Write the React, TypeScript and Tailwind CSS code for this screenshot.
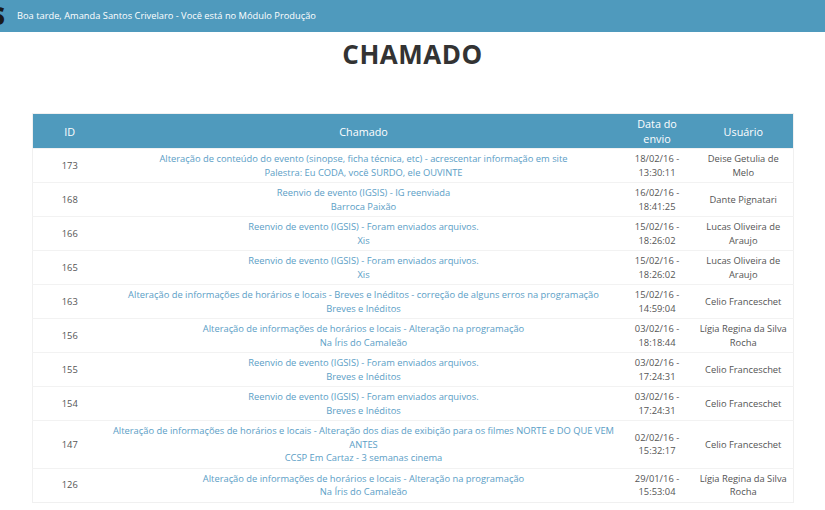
import React from "react";

type Row = { id: string; title: string; sub: string; date: string; time: string; user: string };

const rows: Row[] = [
  { id: "173", title: "Alteração de conteúdo do evento (sinopse, ficha técnica, etc) - acrescentar informação em site", sub: "Palestra: Eu CODA, você SURDO, ele OUVINTE", date: "18/02/16 -", time: "13:30:11", user: "Deise Getulia de Melo" },
  { id: "168", title: "Reenvio de evento (IGSIS) - IG reenviada", sub: "Barroca Paixão", date: "16/02/16 -", time: "18:41:25", user: "Dante Pignatari" },
  { id: "166", title: "Reenvio de evento (IGSIS) - Foram enviados arquivos.", sub: "Xis", date: "15/02/16 -", time: "18:26:02", user: "Lucas Oliveira de Araujo" },
  { id: "165", title: "Reenvio de evento (IGSIS) - Foram enviados arquivos.", sub: "Xis", date: "15/02/16 -", time: "18:26:02", user: "Lucas Oliveira de Araujo" },
  { id: "163", title: "Alteração de informações de horários e locais - Breves e Inéditos - correção de alguns erros na programação", sub: "Breves e Inéditos", date: "15/02/16 -", time: "14:59:04", user: "Celio Franceschet" },
  { id: "156", title: "Alteração de informações de horários e locais - Alteração na programação", sub: "Na Íris do Camaleão", date: "03/02/16 -", time: "18:18:44", user: "Lígia Regina da Silva Rocha" },
  { id: "155", title: "Reenvio de evento (IGSIS) - Foram enviados arquivos.", sub: "Breves e Inéditos", date: "03/02/16 -", time: "17:24:31", user: "Celio Franceschet" },
  { id: "154", title: "Reenvio de evento (IGSIS) - Foram enviados arquivos.", sub: "Breves e Inéditos", date: "03/02/16 -", time: "17:24:31", user: "Celio Franceschet" },
  { id: "147", title: "Alteração de informações de horários e locais - Alteração dos dias de exibição para os filmes NORTE e DO QUE VEM ANTES", sub: "CCSP Em Cartaz - 3 semanas cinema", date: "02/02/16 -", time: "15:32:17", user: "Celio Franceschet" },
  { id: "126", title: "Alteração de informações de horários e locais - Alteração na programação", sub: "Na Íris do Camaleão", date: "29/01/16 -", time: "15:53:04", user: "Lígia Regina da Silva Rocha" },
];

export default function App() {
  return (
    <div className="w-[825px] h-[510px] overflow-hidden bg-white" style={{ fontFamily: '"Open Sans", "Noto Sans", sans-serif' }}>
      <div className="h-[32px] bg-[#4f9abd] flex items-center">
        <span className="text-[24px] font-extrabold text-[#1a1a1a] leading-none -ml-[9px] w-[16px] overflow-hidden">S</span>
        <span className="ml-[10px] text-white text-[9.3px]">Boa tarde, Amanda Santos Crivelaro - Você está no Módulo Produção</span>
      </div>
      <div className="flex justify-center pt-[4px]">
        <h1 className="text-[26px] font-bold text-[#333] tracking-[0.5px] leading-[36px]">CHAMADO</h1>
      </div>
      <div className="pl-[32px] pt-[41px]">
        <table className="w-[761px] table-fixed border-collapse border border-[#f0f0f0] text-center">
          <colgroup>
            <col className="w-[74px]" />
            <col className="w-[514px]" />
            <col className="w-[73px]" />
            <col className="w-[100px]" />
          </colgroup>
          <thead>
            <tr className="bg-[#4f9abd] text-white text-[10.8px] leading-[15px] h-[35px]">
              <th className="font-normal px-[4px]">ID</th>
              <th className="font-normal px-[4px]">Chamado</th>
              <th className="font-normal px-[8px]">Data do envio</th>
              <th className="font-normal px-[4px]">Usuário</th>
            </tr>
          </thead>
          <tbody className="text-[9.35px] leading-[13.5px] text-[#555]">
            {rows.map((r) => (
              <tr key={r.id} className="border-t border-[#f2f2f2] h-[34px]">
                <td className="px-[4px] py-[3px]">{r.id}</td>
                <td className="px-[6px] py-[3px] text-[#5b9ec6]">
                  <div>{r.title}</div>
                  <div>{r.sub}</div>
                </td>
                <td className="px-[10px] py-[3px]">
                  <div>{r.date}</div>
                  <div>{r.time}</div>
                </td>
                <td className="px-[5px] py-[3px]">{r.user}</td>
              </tr>
            ))}
          </tbody>
        </table>
      </div>
    </div>
  );
}
